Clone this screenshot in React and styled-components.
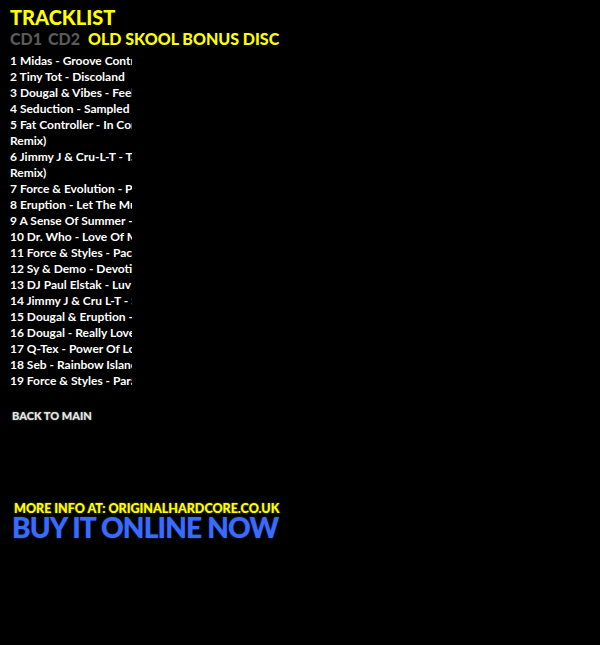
import styled, { createGlobalStyle } from "styled-components";

const GlobalStyle = createGlobalStyle`
  html, body {
    margin: 0;
    padding: 0;
    background: #000;
  }
  body {
    font-family: "Lato", "Liberation Sans", sans-serif;
  }
`;

const tracks = [
  "1 Midas - Groove Control",
  "2 Tiny Tot - Discoland",
  "3 Dougal & Vibes - Feel Good",
  "4 Seduction - Sampled Heaven",
  "5 Fat Controller - In Control (DJ Slipmatt Remix)",
  "6 Jimmy J & Cru-L-T - Take Me Up (DNA Remix)",
  "7 Force & Evolution - Perfect Dreams",
  "8 Eruption - Let The Music",
  "9 A Sense Of Summer - Sunshine",
  "10 Dr. Who - Love Of My Life",
  "11 Force & Styles - Pacific Sun",
  "12 Sy & Demo - Devotion",
  "13 DJ Paul Elstak - Luv U More",
  "14 Jimmy J & Cru L-T - Six Days",
  "15 Dougal & Eruption - Party Time",
  "16 Dougal - Really Love You",
  "17 Q-Tex - Power Of Love",
  "18 Seb - Rainbow Island",
  "19 Force & Styles - Paradise & Dreams",
];

export default function App() {
  return (
    <Page>
      <GlobalStyle />
      <Title>TRACKLIST</Title>
      <Tabs>
        <Tab>CD1</Tab>
        <Tab>CD2</Tab>
        <Tab $active>OLD SKOOL BONUS DISC</Tab>
      </Tabs>
      <ListClip>
        <List>
          {tracks.map((t) => (
            <Track key={t}>{t}</Track>
          ))}
        </List>
      </ListClip>
      <BackLink>BACK TO MAIN</BackLink>
      <Footer>
        <MoreInfo>MORE INFO AT: ORIGINALHARDCORE.CO.UK</MoreInfo>
        <BuyNow>BUY IT ONLINE NOW</BuyNow>
      </Footer>
    </Page>
  );
}

const Page = styled.div`
  width: 600px;
  height: 645px;
  background: #000;
  padding: 6px 0 0 10px;
  box-sizing: border-box;
  display: flex;
  flex-direction: column;
`;

const Title = styled.h1`
  margin: 0;
  font-size: 20px;
  line-height: 22px;
  font-weight: 900;
  color: #ffff00;
`;

const Tabs = styled.div`
  display: flex;
  gap: 6px;
  margin-top: 1px;
  margin-bottom: 4px;
`;

const Tab = styled.span`
  font-size: 16px;
  line-height: 20px;
  font-weight: 900;
  color: ${(p) => (p.$active ? "#ffff00" : "#5a5a5a")};
  margin-left: ${(p) => (p.$active ? "2px" : "0")};
`;

const ListClip = styled.div`
  width: 122px;
  overflow: hidden;
`;

const List = styled.ul`
  list-style: none;
  margin: 0;
  padding: 0;
  width: 240px;
`;

const Track = styled.li`
  font-size: 12px;
  line-height: 16px;
  font-weight: 700;
  color: #fff;
`;

const BackLink = styled.a`
  margin: 20px 0 0 2px;
  font-size: 11px;
  line-height: 14px;
  font-weight: 900;
  color: #e6e6e6;
  text-shadow: 0 0 2px rgba(255, 255, 255, 0.4);
  cursor: pointer;
`;

const Footer = styled.div`
  margin-top: 80px;
  display: flex;
  flex-direction: column;
`;

const MoreInfo = styled.div`
  margin-left: 4px;
  font-size: 12.5px;
  line-height: 12px;
  font-weight: 900;
  color: #ffff00;
  text-shadow: 0 0 2px rgba(255, 255, 0, 0.5);
`;

const BuyNow = styled.div`
  margin-left: 2px;
  font-size: 28px;
  line-height: 24px;
  font-weight: 900;
  letter-spacing: -0.8px;
  color: #3a6bff;
  text-shadow: 0 0 2px rgba(58, 107, 255, 0.5);
`;
